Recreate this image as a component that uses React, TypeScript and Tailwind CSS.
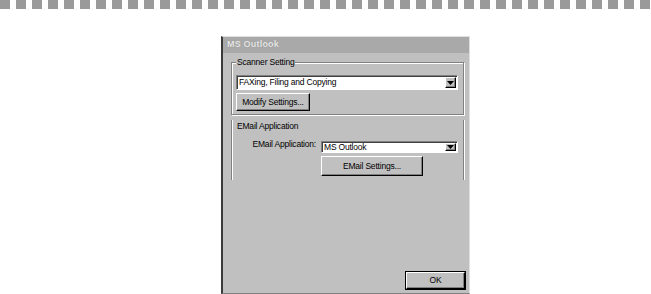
import React from 'react';

const font = "font-['Liberation_Sans',Arial,sans-serif]";

function DropArrow() {
  return (
    <div className="flex h-full w-[11px] items-center justify-center border border-t-white border-l-white border-b-black border-r-black bg-[#c0c0c0] shadow-[inset_-1px_-1px_0_#808080]">
      <svg width="7" height="4" viewBox="0 0 7 4">
        <path d="M0 0h7L3.5 4z" fill="#000" />
      </svg>
    </div>
  );
}

function Combo({ value, className }: { value: string; className: string }) {
  return (
    <div className={`flex items-stretch border border-t-[#808080] border-l-[#808080] border-b-white border-r-white bg-white shadow-[inset_1px_1px_0_#404040] ${className}`}>
      <div className="flex flex-1 items-center pl-[2px] text-[8.5px] tracking-[-0.2px] leading-none text-black">{value}</div>
      <div className="p-[1px] pl-0">
        <DropArrow />
      </div>
    </div>
  );
}

function Button({ label, className }: { label: string; className: string }) {
  return (
    <div className={`flex items-center justify-center border border-t-white border-l-white border-b-black border-r-black bg-[#c0c0c0] shadow-[inset_-1px_-1px_0_#808080] text-[8.5px] tracking-[-0.2px] leading-none text-black ${className}`}>
      {label}
    </div>
  );
}

export default function App() {
  return (
    <div className={`relative h-[294px] w-[651px] overflow-hidden bg-white ${font}`}>
      {/* dashed header strip */}
      <div className="flex gap-[6.5px]">
        {Array.from({ length: 41 }).map((_, i) => (
          <div key={i} className="h-[9px] w-[9.5px] shrink-0 bg-[#9a9a9a]" />
        ))}
      </div>

      {/* dialog */}
      <div className="ml-[221px] mt-[27px] flex h-[258px] w-[249px] flex-col border-t border-r border-b border-l-2 border-t-[#dfdfdf] border-r-[#dfdfdf] border-b-[#808080] border-l-[#3a3a3a] bg-[#c0c0c0]">
        <div className="flex h-[16px] items-center bg-[#a9a9a9] pl-[4px] text-[9px] font-bold tracking-[0.2px] text-[#e6e6e6] [text-shadow:0_0_1px_#808080]">
          MS Outlook
        </div>

        {/* Scanner Setting group */}
        <div className="relative ml-[8px] mt-[9px] h-[53px] w-[233px] border border-[#808080] shadow-[inset_1px_1px_0_#fff,1px_1px_0_#fff] px-[4px] pt-[12px]">
          <span className="absolute -top-[6px] left-[4px] bg-[#c0c0c0] px-[1px] text-[8.5px] tracking-[-0.2px] leading-[11px] text-black">
            Scanner Setting
          </span>
          <Combo value="FAXing, Filing and Copying" className="h-[15px] w-[222px]" />
          <Button label="Modify Settings..." className="mt-[3px] h-[18px] w-[74px]" />
        </div>

        {/* EMail Application group */}
        <div className="ml-[8px] mt-[5px] flex h-[60px] w-[233px] flex-col border-l border-r border-l-[#808080] border-r-[#808080] shadow-[inset_1px_0_0_#fff,1px_0_0_#fff]">
          <div className="pl-[5px] pt-[1px] text-[8.5px] tracking-[-0.2px] leading-[11px] text-black">EMail Application</div>
          <div className="mt-[9px] flex items-start">
            <div className="w-[84px] text-right text-[8.5px] tracking-[-0.2px] leading-[6px] text-black">EMail Application:</div>
            <Combo value="MS Outlook" className="ml-[5px] h-[12px] w-[137px]" />
          </div>
          <Button label="EMail Settings..." className="ml-[89px] mt-[3px] h-[20px] w-[102px]" />
        </div>

        <div className="flex-1" />

        <div className="flex justify-end pb-[3px] pr-[3px]">
          <div className="border border-black">
            <Button label="OK" className="h-[17px] w-[59px]" />
          </div>
        </div>
      </div>
    </div>
  );
}
